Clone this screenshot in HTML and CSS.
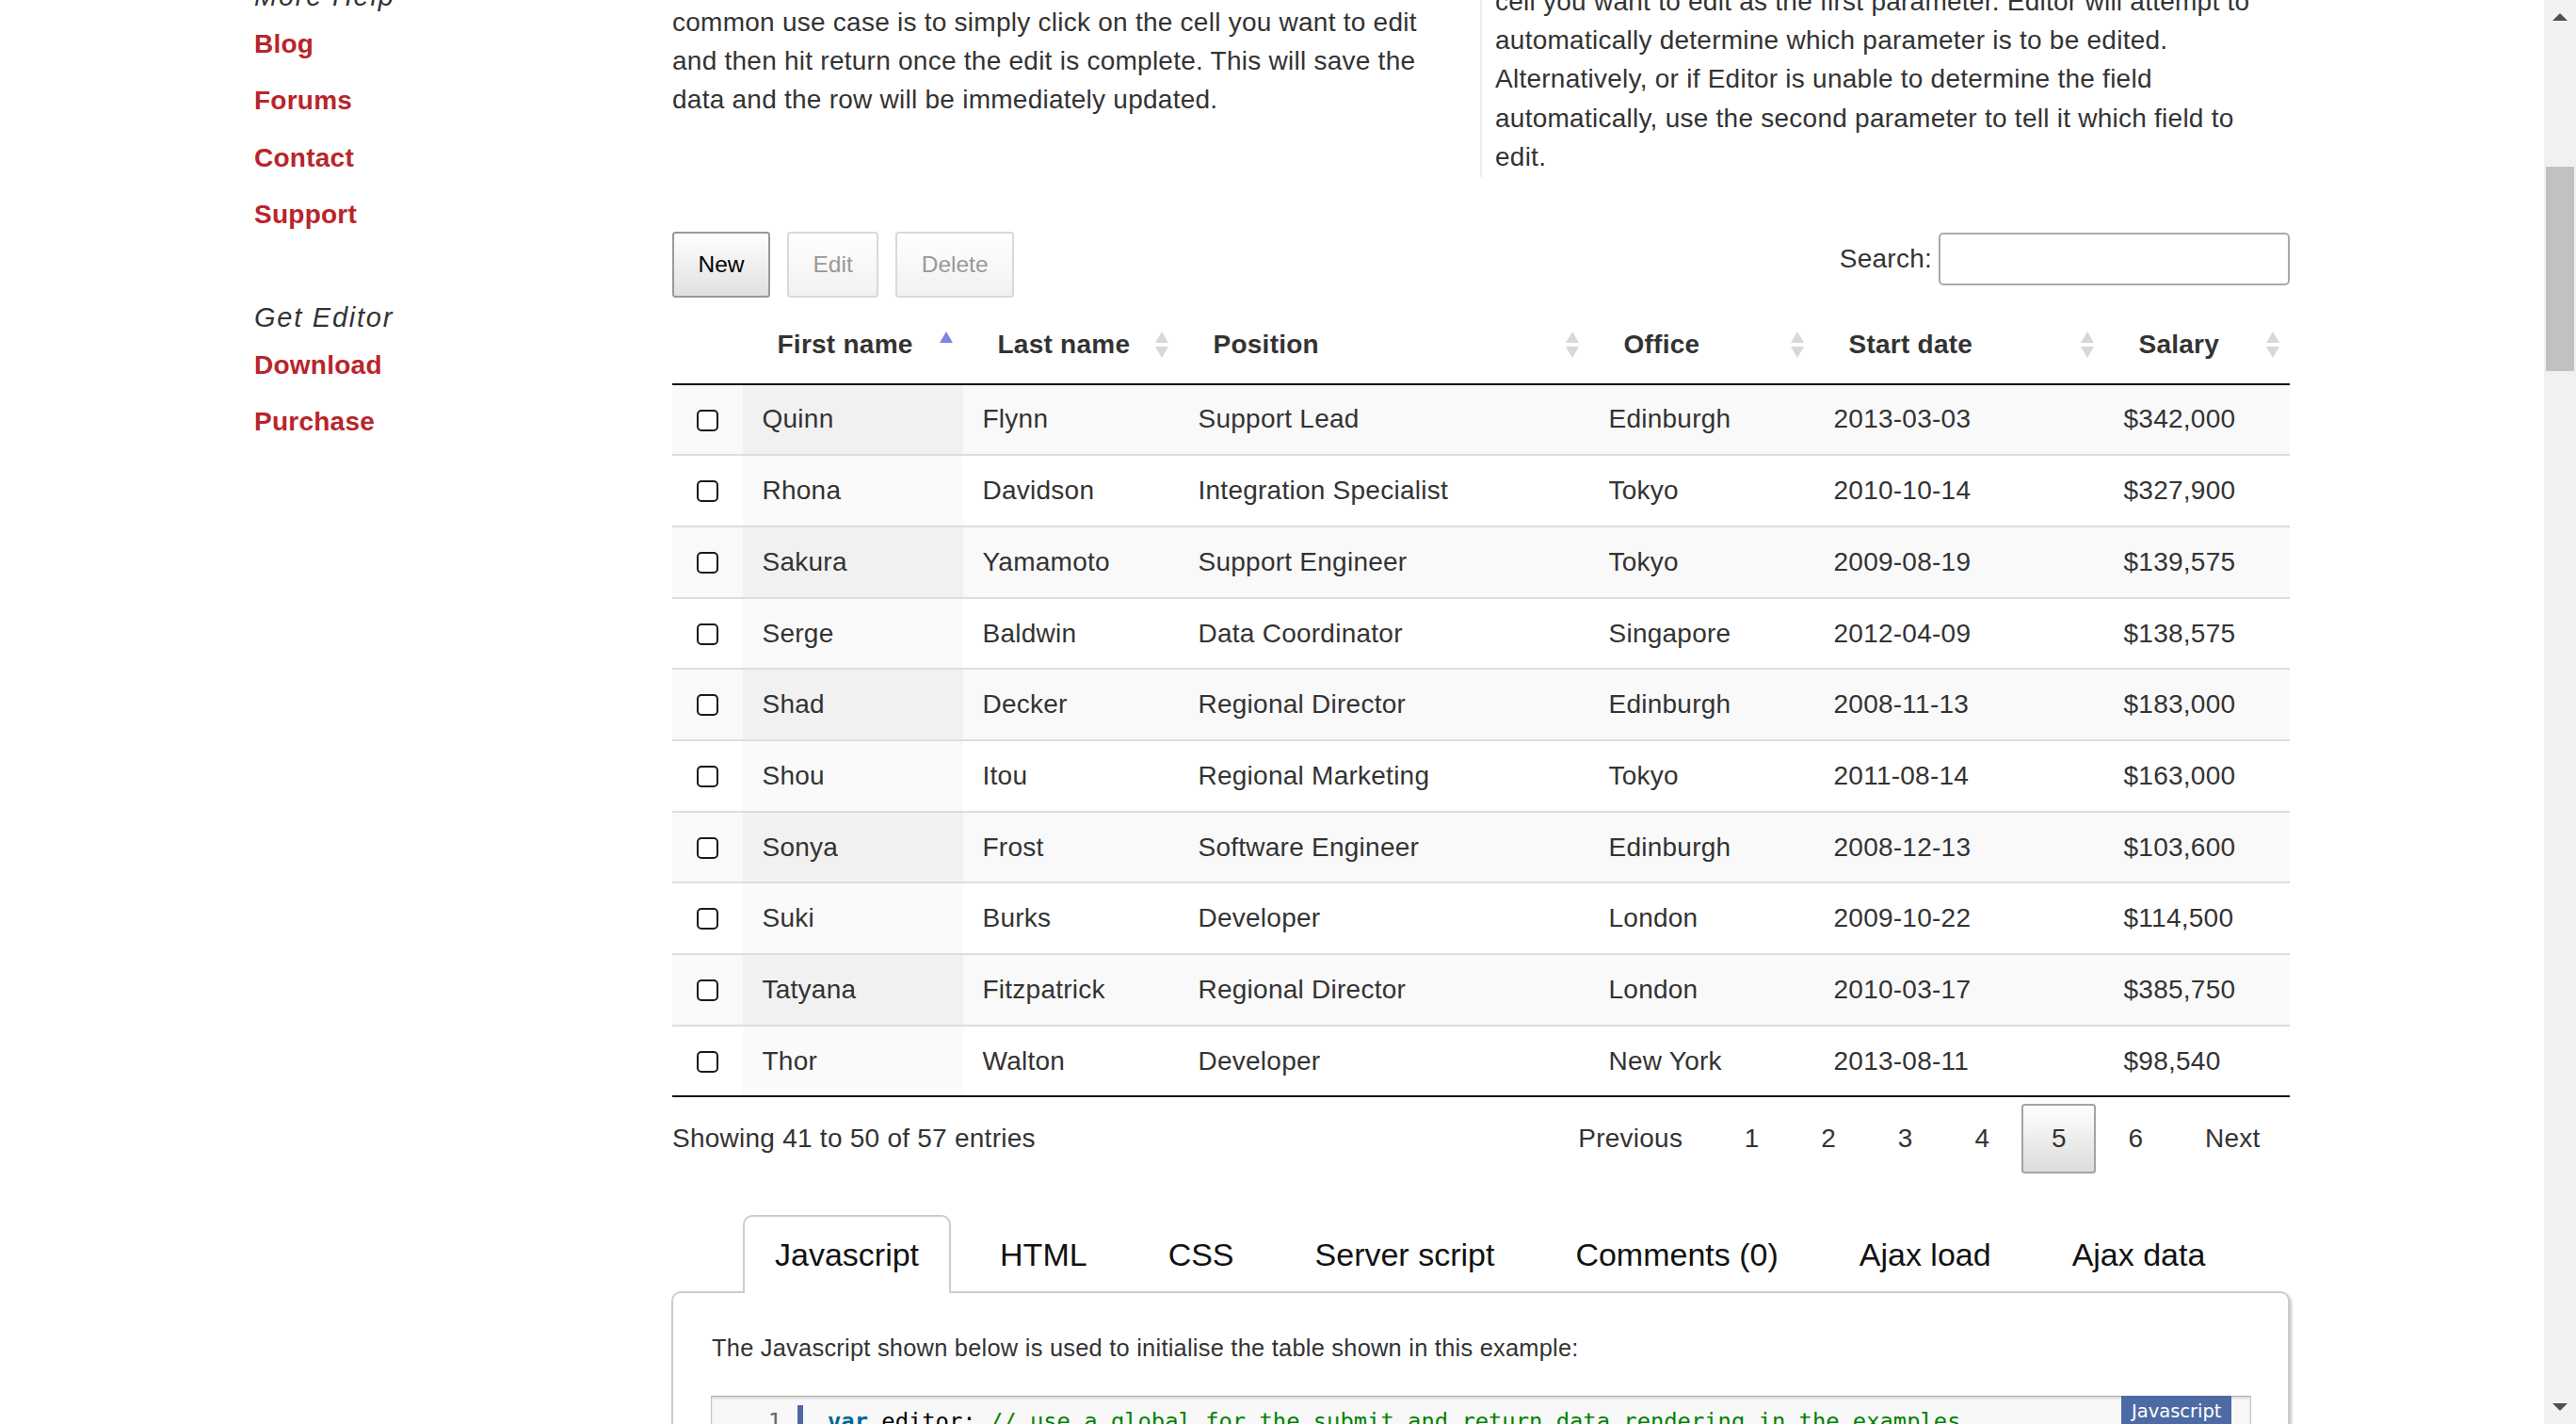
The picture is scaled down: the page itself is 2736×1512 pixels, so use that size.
FILE: index.html
```html
<!DOCTYPE html>
<html lang="en">
<head>
<meta charset="utf-8">
<title>Editor example - Inline editing</title>
<link rel="stylesheet" href="styles.css">
</head>
<body>
<div class="page">
  <aside class="sidebar">
    <h5 class="side-title">More Help</h5>
    <ul class="side-links">
      <li><a href="#">Blog</a></li>
      <li><a href="#">Forums</a></li>
      <li><a href="#">Contact</a></li>
      <li><a href="#">Support</a></li>
    </ul>
    <h5 class="side-title second">Get Editor</h5>
    <ul class="side-links">
      <li><a href="#">Download</a></li>
      <li><a href="#">Purchase</a></li>
    </ul>
  </aside>

  <main class="content">
    <div class="intro">
      <div class="intro-col left">
        <p>common use case is to simply click on the cell you want to edit and then hit return once the edit is complete. This will save the data and the row will be immediately updated.</p>
      </div>
      <div class="intro-col right">
        <p>cell you want to edit as the first parameter. Editor will attempt to automatically determine which parameter is to be edited. Alternatively, or if Editor is unable to determine the field automatically, use the second parameter to tell it which field to edit.</p>
      </div>
    </div>

    <div class="toolbar">
      <div class="buttons">
        <button class="dt-btn">New</button>
        <button class="dt-btn disabled">Edit</button>
        <button class="dt-btn disabled">Delete</button>
      </div>
      <label class="search">Search:<input type="search" class="search-input"></label>
    </div>

    <table class="dt">
      <colgroup>
        <col class="c-check">
        <col class="c-first">
        <col class="c-last">
        <col class="c-pos">
        <col class="c-office">
        <col class="c-date">
        <col class="c-salary">
      </colgroup>
      <thead>
        <tr>
          <th class="check"></th>
          <th>First name<span class="sort asc"><i class="up"></i></span></th>
          <th>Last name<span class="sort"><i class="up"></i><i class="down"></i></span></th>
          <th>Position<span class="sort"><i class="up"></i><i class="down"></i></span></th>
          <th>Office<span class="sort"><i class="up"></i><i class="down"></i></span></th>
          <th>Start date<span class="sort"><i class="up"></i><i class="down"></i></span></th>
          <th>Salary<span class="sort"><i class="up"></i><i class="down"></i></span></th>
        </tr>
      </thead>
      <tbody>
        <tr class="odd"><td class="check"><span class="box"></span></td><td class="sorted">Quinn</td><td>Flynn</td><td>Support Lead</td><td>Edinburgh</td><td>2013-03-03</td><td>$342,000</td></tr>
        <tr class="even"><td class="check"><span class="box"></span></td><td class="sorted">Rhona</td><td>Davidson</td><td>Integration Specialist</td><td>Tokyo</td><td>2010-10-14</td><td>$327,900</td></tr>
        <tr class="odd"><td class="check"><span class="box"></span></td><td class="sorted">Sakura</td><td>Yamamoto</td><td>Support Engineer</td><td>Tokyo</td><td>2009-08-19</td><td>$139,575</td></tr>
        <tr class="even"><td class="check"><span class="box"></span></td><td class="sorted">Serge</td><td>Baldwin</td><td>Data Coordinator</td><td>Singapore</td><td>2012-04-09</td><td>$138,575</td></tr>
        <tr class="odd"><td class="check"><span class="box"></span></td><td class="sorted">Shad</td><td>Decker</td><td>Regional Director</td><td>Edinburgh</td><td>2008-11-13</td><td>$183,000</td></tr>
        <tr class="even"><td class="check"><span class="box"></span></td><td class="sorted">Shou</td><td>Itou</td><td>Regional Marketing</td><td>Tokyo</td><td>2011-08-14</td><td>$163,000</td></tr>
        <tr class="odd"><td class="check"><span class="box"></span></td><td class="sorted">Sonya</td><td>Frost</td><td>Software Engineer</td><td>Edinburgh</td><td>2008-12-13</td><td>$103,600</td></tr>
        <tr class="even"><td class="check"><span class="box"></span></td><td class="sorted">Suki</td><td>Burks</td><td>Developer</td><td>London</td><td>2009-10-22</td><td>$114,500</td></tr>
        <tr class="odd"><td class="check"><span class="box"></span></td><td class="sorted">Tatyana</td><td>Fitzpatrick</td><td>Regional Director</td><td>London</td><td>2010-03-17</td><td>$385,750</td></tr>
        <tr class="even last"><td class="check"><span class="box"></span></td><td class="sorted">Thor</td><td>Walton</td><td>Developer</td><td>New York</td><td>2013-08-11</td><td>$98,540</td></tr>
      </tbody>
    </table>

    <div class="dt-footer">
      <div class="info">Showing 41 to 50 of 57 entries</div>
      <div class="paginate">
        <a class="pg" href="#">Previous</a>
        <a class="pg" href="#">1</a>
        <a class="pg" href="#">2</a>
        <a class="pg" href="#">3</a>
        <a class="pg" href="#">4</a>
        <a class="pg current" href="#">5</a>
        <a class="pg" href="#">6</a>
        <a class="pg" href="#">Next</a>
      </div>
    </div>

    <ul class="tabs">
      <li class="tab active">Javascript</li>
      <li class="tab">HTML</li>
      <li class="tab">CSS</li>
      <li class="tab">Server script</li>
      <li class="tab">Comments (0)</li>
      <li class="tab">Ajax load</li>
      <li class="tab">Ajax data</li>
    </ul>
    <div class="panel">
      <p class="panel-text">The Javascript shown below is used to initialise the table shown in this example:</p>
      <div class="code">
        <span class="code-label">Javascript</span>
        <div class="code-line">
          <span class="gutter">1</span>
          <span class="code-text"><span class="kw">var</span> editor; <span class="cm">// use a global for the submit and return data rendering in the examples</span></span>
        </div>
      </div>
    </div>
  </main>
</div>

<div class="scrollbar">
  <span class="arrow up"></span>
  <span class="thumb"></span>
  <span class="arrow down"></span>
</div>
</body>
</html>
```

FILE: styles.css
```css
html, body {
  margin: 0;
  padding: 0;
  height: 1512px;
  overflow: hidden;
  background: #fff;
}

body {
  font-family: "Liberation Sans", Arial, sans-serif;
  font-size: 28px;
  letter-spacing: 0.25px;
  color: #333;
}

.page {
  display: flex;
  align-items: flex-start;
  width: 2702px;
}

/* ---------- sidebar ---------- */
.sidebar {
  flex: 0 0 714px;
  box-sizing: border-box;
  padding-left: 270px;
  margin-top: -24.2px;
}

.side-title {
  margin: 0;
  font-size: 29px;
  font-style: italic;
  font-weight: normal;
  letter-spacing: 1.75px;
  line-height: 41px;
  color: #333;
}

.side-title.second {
  margin-top: 57.8px;
}

.side-links {
  list-style: none;
  margin: 0;
  padding: 0;
}

.side-links li {
  line-height: 60.5px;
}

.side-links a {
  color: #b9252a;
  font-weight: bold;
  font-size: 28px;
  text-decoration: none;
}

/* ---------- main ---------- */
.content {
  flex: 0 0 1718px;
  width: 1718px;
}

.intro {
  display: grid;
  grid-template-columns: 858px 860px;
  margin-top: -19.4px;
}

.intro p {
  margin: 0;
  font-size: 28px;
  line-height: 41.3px;
}

.intro-col.left {
  padding: 22px 28px 0 0;
}

.intro-col.right {
  border-left: 2px solid #eee;
  padding: 0 9px 1px 14px;
}

/* toolbar */
.toolbar {
  margin-top: 58px;
  display: flex;
  justify-content: space-between;
  align-items: flex-start;
}

.buttons {
  display: flex;
  gap: 18px;
}

.dt-btn {
  height: 70px;
  padding: 0 25.5px;
  font-family: "Liberation Sans", Arial, sans-serif;
  font-size: 24.5px;
  color: #000;
  border: 2px solid #999;
  border-radius: 3.5px;
  background: linear-gradient(to bottom, #fff 0%, #e0e0e0 100%);
}

.dt-btn.disabled {
  color: #999;
  border-color: #d9d9d9;
  background: linear-gradient(to bottom, #fff 0%, #f1f1f1 100%);
}

.search {
  margin-top: 1px;
  display: flex;
  align-items: center;
  gap: 7px;
  font-size: 28px;
}

.search-input {
  width: 373px;
  height: 56px;
  box-sizing: border-box;
  border: 2px solid #aaa;
  border-radius: 5px;
  background: #fff;
  margin: 0;
}

/* table */
.dt {
  margin-top: 16.5px;
  width: 1718px;
  table-layout: fixed;
  border-collapse: separate;
  border-spacing: 0;
}

.c-check { width: 75px; }
.c-first { width: 234px; }
.c-last { width: 229px; }
.c-pos { width: 436px; }
.c-office { width: 239px; }
.c-date { width: 308px; }
.c-salary { width: 197px; }

.dt th {
  position: relative;
  text-align: left;
  font-size: 28px;
  font-weight: bold;
  line-height: 32px;
  padding: 17px 0 25px 36.5px;
  border-bottom: 2px solid #111;
  color: #333;
  white-space: nowrap;
}

.dt th.check {
  padding: 0;
}

.sort {
  position: absolute;
  top: 19px;
  right: 11px;
  width: 14px;
  height: 28px;
}

.sort i {
  position: absolute;
  left: 0;
  width: 0;
  height: 0;
  border-left: 7px solid transparent;
  border-right: 7px solid transparent;
}

.sort .up {
  top: 0;
  border-bottom: 12px solid #d8d8d8;
}

.sort .down {
  bottom: 0;
  border-top: 12px solid #d8d8d8;
}

.sort.asc .up {
  border-bottom-color: #8383e0;
}

.dt tbody tr {
  height: 75.7px;
}

.dt td {
  padding: 0 0 0 20.5px;
  font-size: 28px;
  line-height: 32px;
  border-bottom: 2px solid #ddd;
  vertical-align: middle;
  white-space: nowrap;
  color: #333;
}

.dt tr.last td {
  border-bottom-color: #111;
}

.dt tr.odd td {
  background: #f9f9f9;
}

.dt tr.odd td.sorted {
  background: #f1f1f1;
}

.dt tr.even td.sorted {
  background: #fafafa;
}

.dt td.check {
  padding: 0;
  text-align: center;
}

.box {
  display: inline-block;
  width: 23px;
  height: 23px;
  box-sizing: border-box;
  border: 2px solid #1a1a1a;
  border-radius: 5px;
  background: #fff;
  vertical-align: middle;
  margin-top: -2px;
}

/* footer */
.dt-footer {
  padding-top: 7px;
  height: 74px;
  display: flex;
  justify-content: space-between;
  align-items: center;
}

.info {
  font-size: 28px;
  line-height: 32px;
}

.paginate {
  display: flex;
  gap: 2.7px;
}

.pg {
  height: 74px;
  box-sizing: border-box;
  padding: 0 29.5px;
  display: flex;
  align-items: center;
  border: 2px solid transparent;
  border-radius: 3.5px;
  color: #333;
  text-decoration: none;
  font-size: 28px;
}

.pg.current {
  border-color: #a3a3a3;
  background: linear-gradient(to bottom, #fff 0%, #dcdcdc 100%);
}

/* tabs */
.tabs {
  list-style: none;
  margin: 44px 0 0;
  padding: 0 0 0 75px;
  display: flex;
  gap: 18px;
}

.tab {
  position: relative;
  z-index: 1;
  height: 83px;
  margin-bottom: -2px;
  box-sizing: border-box;
  padding: 0 32px;
  display: flex;
  align-items: center;
  font-size: 34px;
  letter-spacing: 0;
  color: #111;
  border: 2px solid transparent;
  border-bottom: 0;
  border-radius: 10px 10px 0 0;
}

.tab.active {
  border-color: #ccc;
  background: #fff;
}

.panel {
  border: 2px solid #ccc;
  border-radius: 10px;
  box-shadow: 2px 2px 3px rgba(0, 0, 0, 0.22);
  padding: 40.8px 39px 0 41px;
  min-height: 400px;
  margin-left: -1px;
}

.panel-text {
  margin: 0 0 32.7px;
  font-size: 25.4px;
  line-height: 35.5px;
  color: #333;
}

.code {
  position: relative;
  border: 1px solid #c4c4c4;
  border-top-color: #a8a8a8;
  background: #f8f8f8;
  box-shadow: inset 0 2px 3px rgba(0, 0, 0, 0.12);
  height: 240px;
  padding-top: 9px;
  margin-left: -1px;
}

.code-label {
  position: absolute;
  top: -1px;
  right: 20px;
  background: #4d6aa4;
  color: #fff;
  font-family: "DejaVu Sans", Verdana, sans-serif;
  font-size: 19.5px;
  letter-spacing: 0;
  line-height: 34px;
  padding: 0 10.5px;
}

.code-line {
  display: flex;
  font-family: "DejaVu Sans Mono", "Liberation Mono", monospace;
  font-size: 23.8px;
  letter-spacing: 0;
  line-height: 34px;
}

.gutter {
  width: 74px;
  padding-right: 17px;
  text-align: right;
  color: #666;
  border-right: 6px solid #4d6aa4;
}

.code-text {
  padding-left: 26px;
  color: #000;
  white-space: pre;
}

.kw {
  color: #006699;
  font-weight: bold;
}

.cm {
  color: #008200;
}

/* fake browser scrollbar */
.scrollbar {
  position: fixed;
  top: 0;
  right: 0;
  width: 34px;
  height: 1512px;
  background: #f1f1f1;
}

.thumb {
  position: absolute;
  top: 177px;
  left: 2px;
  width: 30px;
  height: 217px;
  background: #c1c1c1;
}

.arrow {
  position: absolute;
  left: 9px;
  width: 0;
  height: 0;
  border-left: 8px solid transparent;
  border-right: 8px solid transparent;
}

.arrow.up {
  top: 14px;
  border-bottom: 8px solid #505050;
}

.arrow.down {
  bottom: 14px;
  border-top: 8px solid #505050;
}
```
